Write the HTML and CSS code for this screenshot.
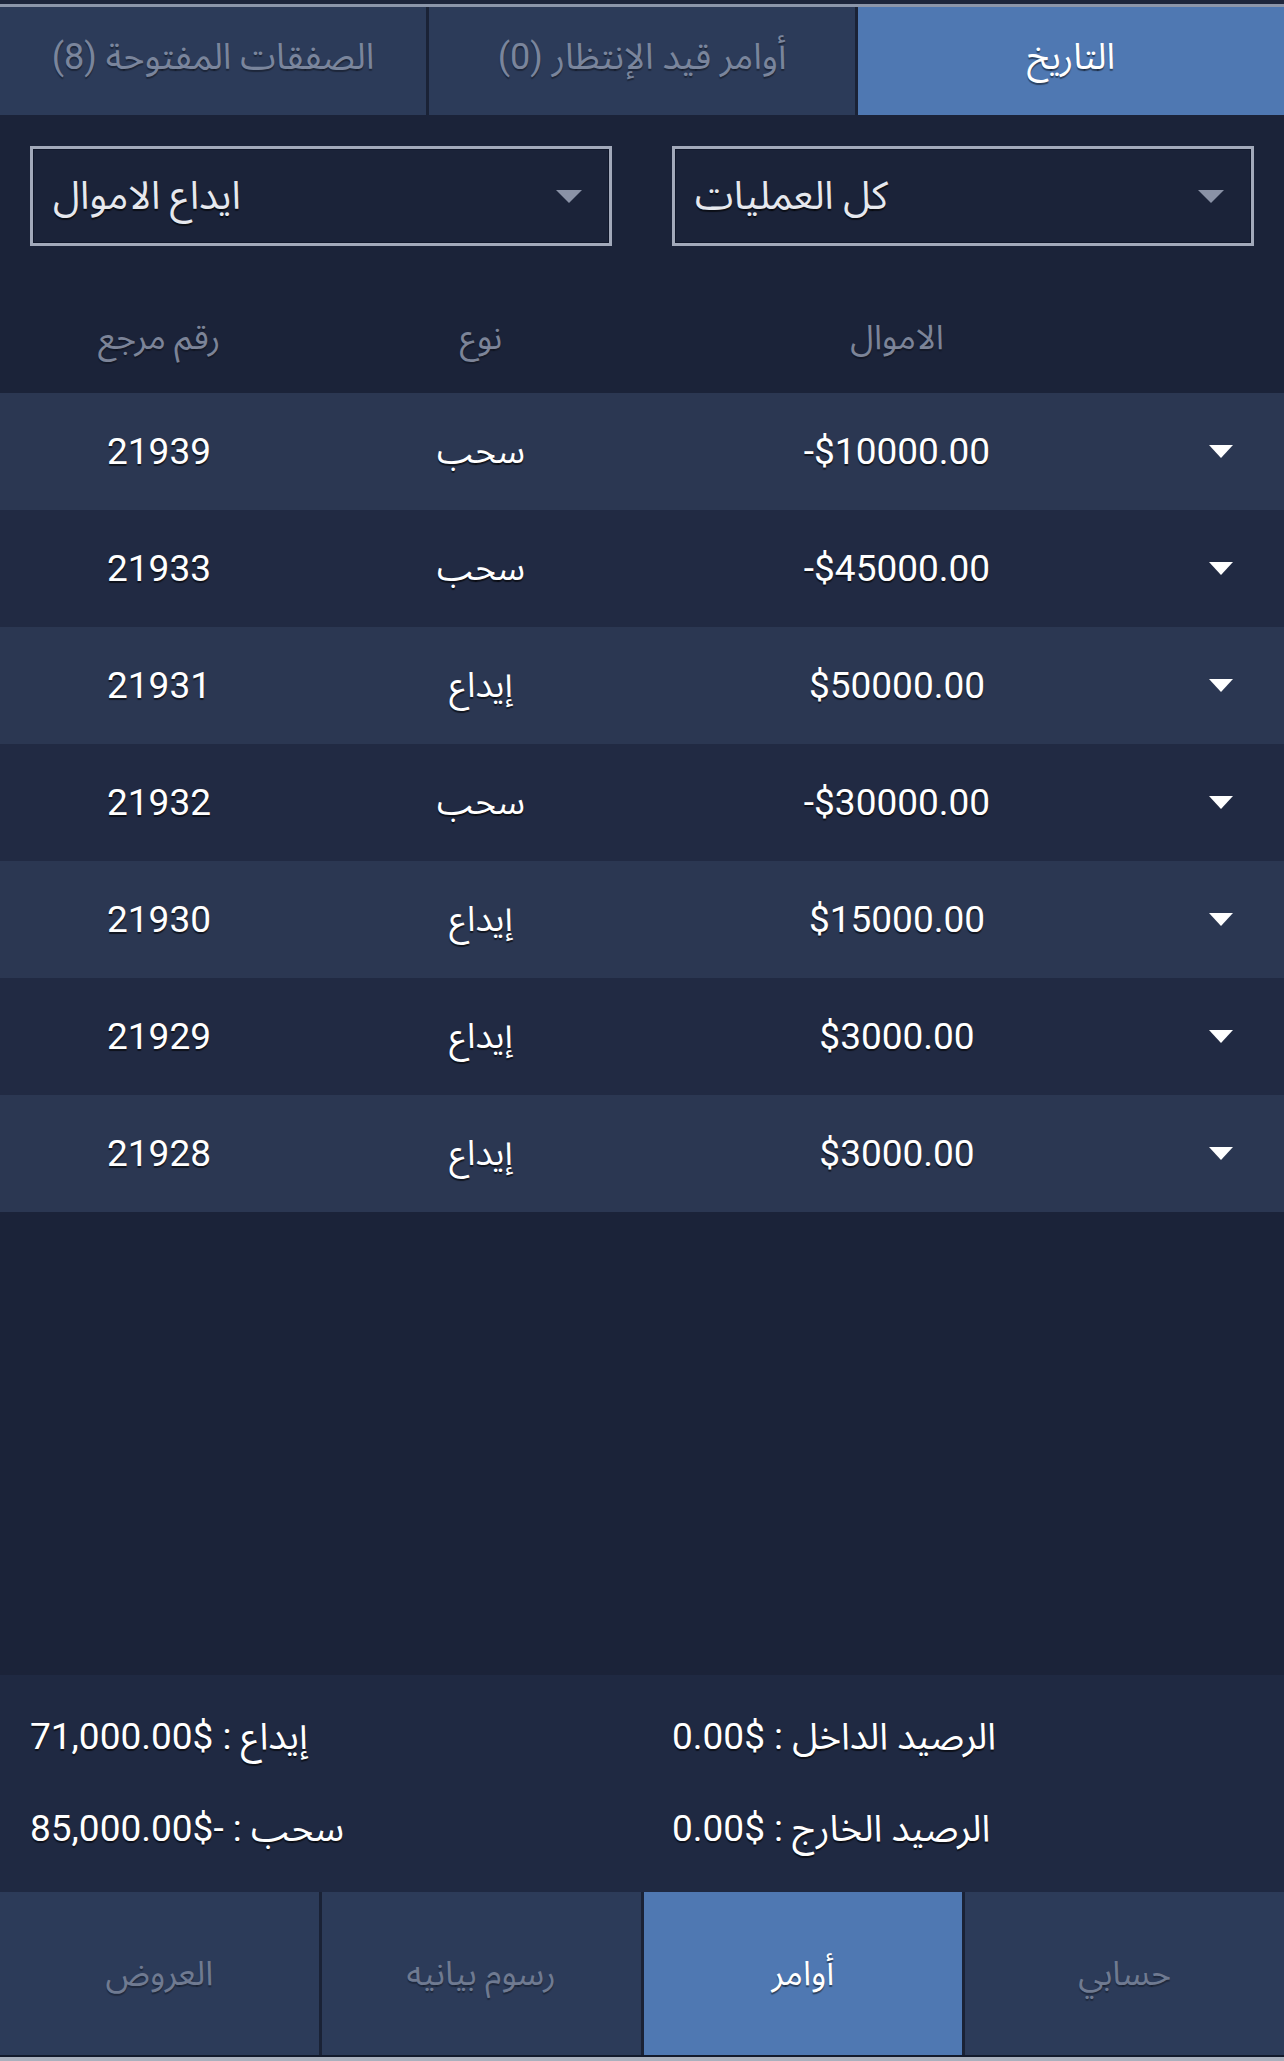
FILE: index.html
```html
<!DOCTYPE html>
<html lang="ar" dir="rtl">
<head>
<meta charset="utf-8">
<title>التاريخ</title>
<link rel="stylesheet" href="styles.css">
</head>
<body>
<div class="app">
  <div class="top-edge"></div>
  <nav class="tabs">
    <div class="tab active">التاريخ</div>
    <div class="tab">أوامر قيد الإنتظار (0)</div>
    <div class="tab">الصفقات المفتوحة (8)</div>
  </nav>

  <div class="filters">
    <div class="select">
      <svg class="caret" width="26" height="13" viewBox="0 0 26 13"><path d="M0 0 H26 L13 13 Z"/></svg>
      <span class="select-label">كل العمليات</span>
    </div>
    <div class="select">
      <svg class="caret" width="26" height="13" viewBox="0 0 26 13"><path d="M0 0 H26 L13 13 Z"/></svg>
      <span class="select-label">ايداع الاموال</span>
    </div>
  </div>

  <div class="grid head">
    <span></span>
    <span>الاموال</span>
    <span>نوع</span>
    <span>رقم مرجع</span>
  </div>

  <div class="rows">
    <div class="grid row">
      <svg class="arrow" width="24" height="13" viewBox="0 0 24 13"><path d="M0 0 H24 L12 13 Z"/></svg>
      <span class="num" dir="ltr">-$10000.00</span><span>سحب</span><span class="num">21939</span>
    </div>
    <div class="grid row">
      <svg class="arrow" width="24" height="13" viewBox="0 0 24 13"><path d="M0 0 H24 L12 13 Z"/></svg>
      <span class="num" dir="ltr">-$45000.00</span><span>سحب</span><span class="num">21933</span>
    </div>
    <div class="grid row">
      <svg class="arrow" width="24" height="13" viewBox="0 0 24 13"><path d="M0 0 H24 L12 13 Z"/></svg>
      <span class="num" dir="ltr">$50000.00</span><span>إيداع</span><span class="num">21931</span>
    </div>
    <div class="grid row">
      <svg class="arrow" width="24" height="13" viewBox="0 0 24 13"><path d="M0 0 H24 L12 13 Z"/></svg>
      <span class="num" dir="ltr">-$30000.00</span><span>سحب</span><span class="num">21932</span>
    </div>
    <div class="grid row">
      <svg class="arrow" width="24" height="13" viewBox="0 0 24 13"><path d="M0 0 H24 L12 13 Z"/></svg>
      <span class="num" dir="ltr">$15000.00</span><span>إيداع</span><span class="num">21930</span>
    </div>
    <div class="grid row">
      <svg class="arrow" width="24" height="13" viewBox="0 0 24 13"><path d="M0 0 H24 L12 13 Z"/></svg>
      <span class="num" dir="ltr">$3000.00</span><span>إيداع</span><span class="num">21929</span>
    </div>
    <div class="grid row">
      <svg class="arrow" width="24" height="13" viewBox="0 0 24 13"><path d="M0 0 H24 L12 13 Z"/></svg>
      <span class="num" dir="ltr">$3000.00</span><span>إيداع</span><span class="num">21928</span>
    </div>
  </div>

  <div class="spacer"></div>

  <div class="summary" dir="ltr">
    <span dir="ltr">71,000.00$ : إيداع</span>
    <span dir="ltr">0.00$ : الرصيد الداخل</span>
    <span dir="ltr">85,000.00$- : سحب</span>
    <span dir="ltr">0.00$ : الرصيد الخارج</span>
  </div>

  <nav class="bottom-nav">
    <div class="nav-item">حسابي</div>
    <div class="nav-item active">أوامر</div>
    <div class="nav-item">رسوم بيانيه</div>
    <div class="nav-item">العروض</div>
  </nav>
  <div class="bottom-edge"></div>
</div>
</body>
</html>
```

FILE: styles.css
```css
* { box-sizing: border-box; }

html, body {
  margin: 0;
  padding: 0;
  background: #1b2339;
}

body {
  font-family: "Roboto", "Noto Sans Arabic", "DejaVu Sans", sans-serif;
  color: #ffffff;
}

.app {
  width: 1284px;
  height: 2061px;
  display: flex;
  flex-direction: column;
  background: #1b2339;
  overflow: hidden;
}

.top-edge {
  height: 7px;
  border-top: 4px solid #1d263c;
  background: #8c96aa;
  flex: none;
}

.tabs {
  display: flex;
  height: 108px;
  gap: 3px;
  background: #1a2236;
  flex: none;
}

.tab {
  flex: 1;
  display: flex;
  align-items: center;
  justify-content: center;
  padding-bottom: 6px;
  background: #2c3b59;
  color: #7a859c;
  font-size: 36px;
  text-shadow: 0 2px 1px rgba(0, 0, 0, 0.35);
}

.tab.active {
  background: #4f78b2;
  color: #ffffff;
  text-shadow: 0 2px 1px rgba(0, 0, 0, 0.45);
}

.filters {
  display: flex;
  gap: 60px;
  padding: 31px 30px 0;
  flex: none;
}

.select {
  flex: 1;
  height: 100px;
  border: 3px solid #a2a9ba;
  box-shadow: inset 0 0 0 1px #10172a;
  display: flex;
  align-items: center;
  justify-content: space-between;
  padding: 0 27px 0 20px;
}

.caret {
  fill: #8a92a6;
  flex: none;
}

.select-label {
  font-size: 39px;
  color: #e6e8ee;
  text-shadow: 0 2px 1px rgba(0, 0, 0, 0.6);
}

.grid {
  display: grid;
  grid-template-columns: 134px 506px 326px 318px;
  align-items: center;
  justify-items: center;
}

.head {
  height: 147px;
  padding-top: 69px;
  align-items: start;
  color: #7c8498;
  font-size: 34px;
  line-height: 44px;
  flex: none;
  text-shadow: 0 2px 1px rgba(0, 0, 0, 0.3);
}

.rows {
  display: flex;
  flex-direction: column;
  flex: none;
}

.row {
  height: 117px;
  background: #2b3752;
  font-size: 35px;
  text-shadow: 0 2px 1px rgba(0, 0, 0, 0.6);
}

.row:nth-child(even) {
  background: #212a43;
}

.row .num {
  font-size: 37px;
}

.arrow {
  fill: #ffffff;
  margin-left: 8px;
}

.spacer {
  flex: 1;
}

.summary {
  flex: none;
  height: 217px;
  background: #1f2942;
  display: grid;
  grid-template-columns: 642px 1fr;
  grid-auto-rows: 92px;
  align-items: center;
  padding: 16px 0 17px 30px;
  font-size: 37px;
  text-shadow: 0 2px 1px rgba(0, 0, 0, 0.6);
}

.summary span {
  text-align: left;
}

.bottom-nav {
  display: flex;
  height: 163px;
  gap: 3px;
  background: #1a2236;
  flex: none;
}

.nav-item {
  flex: 1;
  display: flex;
  align-items: center;
  justify-content: center;
  background: #2c3b59;
  color: #6f7a91;
  font-size: 34px;
  text-shadow: 0 2px 1px rgba(0, 0, 0, 0.3);
}

.nav-item.active {
  background: #4f78b2;
  color: #ffffff;
  text-shadow: 0 2px 1px rgba(0, 0, 0, 0.45);
}

.bottom-edge {
  height: 6px;
  border-top: 2px solid #131a2c;
  background: #a9b0bd;
  flex: none;
}
```
